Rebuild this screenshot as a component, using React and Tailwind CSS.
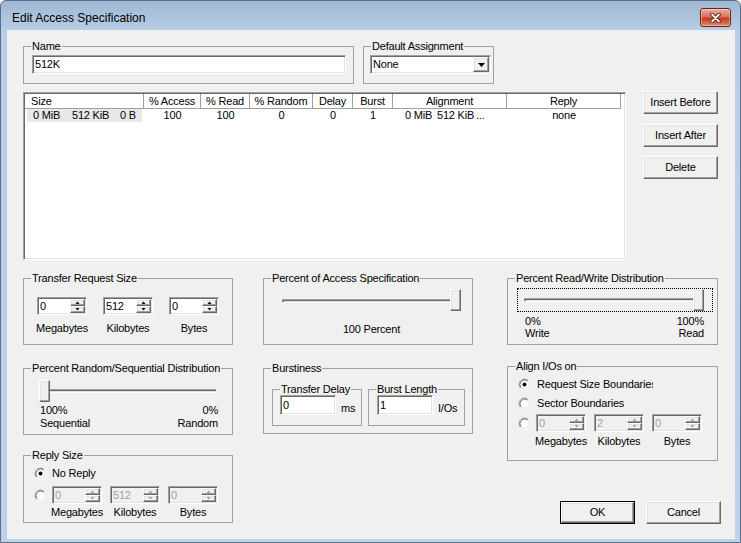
import React from 'react';

// classic win32 3d edges
const SUNKEN =
  'border border-t-[#a0a0a0] border-l-[#a0a0a0] border-r-white border-b-white shadow-[inset_1px_1px_0_#696969,inset_-1px_-1px_0_#e3e3e3]';
const RAISED =
  'border border-t-white border-l-white border-r-[#696969] border-b-[#696969] bg-[#f0f0f0] shadow-[inset_-1px_-1px_0_#a0a0a0,inset_1px_1px_0_#e3e3e3]';

function Group({ title, className = '', children }) {
  return (
    <fieldset className={`shrink-0 border border-[#a0a0a0] ${className}`}>
      <legend className="ml-[7px] px-[1px] leading-[13px] whitespace-nowrap">{title}</legend>
      {children}
    </fieldset>
  );
}

function Button({ children, isDefault, className = '' }) {
  if (isDefault) {
    return (
      <div className={`shrink-0 border border-black ${className}`}>
        <div className={`${RAISED} flex h-full items-center justify-center`}>{children}</div>
      </div>
    );
  }
  return <div className={`${RAISED} flex shrink-0 items-center justify-center ${className}`}>{children}</div>;
}

function Edit({ value, className = '' }) {
  return (
    <div className={`${SUNKEN} flex shrink-0 items-center bg-white pl-[2px] leading-[13px] ${className}`}>{value}</div>
  );
}

function SpinBtn({ up, disabled }) {
  return (
    <div className={`${RAISED} flex h-[7px] items-center justify-center`}>
      <svg width="5" height="3" viewBox="0 0 5 3">
        <path d={up ? 'M0.5 3h4L2.5 0.5z' : 'M0.5 0h4L2.5 2.5z'} fill={disabled ? '#a0a0a0' : '#000'} />
      </svg>
    </div>
  );
}

function Spin({ value, disabled }) {
  return (
    <div
      className={`${SUNKEN} flex h-[18px] w-[50px] shrink-0 ${disabled ? 'bg-[#f0f0f0] text-[#a0a0a0]' : 'bg-white'}`}
    >
      <div className="flex flex-1 items-center pl-[2px] leading-[13px]">{value}</div>
      <div className="my-[1px] mr-[1px] flex w-[15px] flex-col">
        <SpinBtn up disabled={disabled} />
        <SpinBtn disabled={disabled} />
      </div>
    </div>
  );
}

function SpinCol({ value, label, disabled, gap = 'mt-[3px]' }) {
  return (
    <div className="flex w-[50px] flex-col items-center">
      <Spin value={value} disabled={disabled} />
      <div className={`${gap} whitespace-nowrap leading-[13px]`}>{label}</div>
    </div>
  );
}

function Radio({ checked }) {
  return (
    <svg width="13" height="13" viewBox="0 0 13 13" className="shrink-0">
      <circle cx="6.5" cy="6.5" r="5" fill="#fff" />
      <path d="M2.61 10.39A5.5 5.5 0 0 1 10.39 2.61" fill="none" stroke="#a0a0a0" />
      <path d="M10.39 2.61A5.5 5.5 0 0 1 2.61 10.39" fill="none" stroke="#fff" />
      <path d="M3.32 9.68A4.5 4.5 0 0 1 9.68 3.32" fill="none" stroke="#696969" />
      <path d="M9.68 3.32A4.5 4.5 0 0 1 3.32 9.68" fill="none" stroke="#e3e3e3" />
      {checked && <circle cx="6.5" cy="6.5" r="2" fill="#000" />}
    </svg>
  );
}

function Channel({ className }) {
  return <div className={`${SUNKEN} absolute h-[4px] ${className}`} />;
}

function Thumb({ className }) {
  return <div className={`${RAISED} absolute top-0 h-[22px] w-[11px] ${className}`} />;
}

const columns = [
  { label: 'Size', w: 'w-[119px]', left: true },
  { label: '% Access', w: 'w-[57px]' },
  { label: '% Read', w: 'w-[49px]' },
  { label: '% Random', w: 'w-[63px]' },
  { label: 'Delay', w: 'w-[40px]' },
  { label: 'Burst', w: 'w-[40px]' },
  { label: 'Alignment', w: 'w-[114px]' },
  { label: 'Reply', w: 'w-[114px]' },
];

export default function App() {
  return (
    <div className="flex h-[543px] w-[741px] flex-col overflow-hidden rounded-t-[6px] border border-[#5b6f86] bg-[linear-gradient(to_bottom,#9fb8d3_0px,#b8cee7_30px,#bcd2ea_100%)] font-['Liberation_Sans',Arial,sans-serif] text-black">
      {/* title bar */}
      <div className="flex h-[29px] shrink-0 items-start pl-[11px] pr-[9px]">
        <span className="mt-[10px] flex-1 text-[12px] leading-[14px]">Edit Access Specification</span>
        <div className="mt-[7px] flex h-[19px] w-[31px] items-center justify-center rounded-[3px] border border-[#6b2318] bg-[linear-gradient(#eab0a2,#d97059_45%,#c4391d_55%,#dc8a70)] shadow-[inset_0_0_0_1px_rgba(255,255,255,0.35)]">
          <svg width="11" height="10" viewBox="0 0 11 10">
            <path d="M2 1.5l7 7M9 1.5l-7 7" stroke="#4a1209" strokeWidth="3.4" strokeLinecap="round" />
            <path d="M2 1.5l7 7M9 1.5l-7 7" stroke="#fff" strokeWidth="1.8" strokeLinecap="round" />
          </svg>
        </div>
      </div>

      {/* client area */}
      <div className="ml-[6px] h-[509px] w-[728px] shrink-0 bg-[#f0f0f0] pl-[16px] pt-[10px] text-[11px] tracking-[-0.2px]">
        <div className="flex gap-[9px]">
          <Group title="Name" className="h-[44px] w-[331px]">
            <Edit value="512K" className="ml-[8px] mt-[2px] h-[19px] w-[314px]" />
          </Group>
          <Group title="Default Assignment" className="h-[44px] w-[131px]">
            <div className={`${SUNKEN} ml-[6px] mt-[2px] flex h-[19px] w-[121px] bg-white`}>
              <div className="flex flex-1 items-center pl-[2px] leading-[13px]">None</div>
              <div className={`${RAISED} my-[1px] mr-[1px] flex w-[16px] items-center justify-center`}>
                <svg width="7" height="4" viewBox="0 0 7 4">
                  <path d="M0 0h7L3.5 4z" fill="#000" />
                </svg>
              </div>
            </div>
          </Group>
        </div>

        {/* list + side buttons */}
        <div className="mt-[8px] flex items-start">
          <div className={`${SUNKEN} h-[168px] w-[603px] shrink-0 bg-white p-[1px]`}>
            <div className="flex h-[15px]">
              {columns.map((c) => (
                <div
                  key={c.label}
                  className={`${c.w} flex shrink-0 items-center border-r border-b border-r-[#a0a0a0] border-b-[#a0a0a0] leading-[13px] shadow-[inset_1px_1px_0_#fff] ${c.left ? 'pl-[6px]' : 'justify-center'}`}
                >
                  {c.label}
                </div>
              ))}
            </div>
            <div className="flex h-[13px] items-center leading-[13px]">
              <div className="w-[119px] shrink-0 pl-[2px]">
                <div className="flex h-[13px] w-[115px] items-center bg-[#e8e8e8] pl-[6px]">
                  <span className="w-[39px]">0 MiB</span>
                  <span className="w-[48px]">512 KiB</span>
                  <span>0 B</span>
                </div>
              </div>
              <div className="w-[57px] shrink-0 text-center">100</div>
              <div className="w-[49px] shrink-0 text-center">100</div>
              <div className="w-[63px] shrink-0 text-center">0</div>
              <div className="w-[40px] shrink-0 text-center">0</div>
              <div className="w-[40px] shrink-0 text-center">1</div>
              <div className="flex w-[114px] shrink-0 pl-[12px]">
                <span className="w-[32px]">0 MiB</span>
                <span className="w-[39px]">512 KiB</span>
                <span>...</span>
              </div>
              <div className="w-[114px] shrink-0 text-center">none</div>
            </div>
          </div>
          <div className="ml-[17px] mt-[-1px] flex flex-col">
            <Button className="h-[23px] w-[75px]">Insert Before</Button>
            <Button className="mt-[10px] h-[23px] w-[75px]">Insert After</Button>
            <Button className="mt-[9px] h-[23px] w-[75px]">Delete</Button>
          </div>
        </div>

        {/* lower controls */}
        <div className="mt-[12px] flex items-start">
          <div className="flex w-[210px] shrink-0 flex-col">
            <Group title="Transfer Request Size" className="h-[73px] w-[210px]">
              <div className="ml-[13px] mt-[12px] flex gap-[16px]">
                <SpinCol value="0" label="Megabytes" gap="mt-[7px]" />
                <SpinCol value="512" label="Kilobytes" gap="mt-[7px]" />
                <SpinCol value="0" label="Bytes" gap="mt-[7px]" />
              </div>
            </Group>

            <Group title="Percent Random/Sequential Distribution" className="mt-[17px] h-[73px] w-[210px]">
              <div className="relative ml-[14px] mt-[5px] h-[22px] w-[182px]">
                <Channel className="left-[2px] top-[9px] w-[177px]" />
                <Thumb className="left-[1px]" />
              </div>
              <div className="ml-[16px] mt-[2px] flex w-[178px] justify-between leading-[13px]">
                <div>
                  <div>100%</div>
                  <div>Sequential</div>
                </div>
                <div className="text-right">
                  <div>0%</div>
                  <div>Random</div>
                </div>
              </div>
            </Group>

            <Group title="Reply Size" className="mt-[14px] h-[74px] w-[210px]">
              <div className="ml-[10px] mt-[5px]">
                <div className="flex h-[13px] items-center gap-[5px]">
                  <Radio checked />
                  <span className="leading-[13px]">No Reply</span>
                </div>
                <div className="mt-[6px] flex items-center gap-[5px]">
                  <Radio />
                  <div className="flex gap-[8px]">
                    <Spin value="0" disabled />
                    <Spin value="512" disabled />
                    <Spin value="0" disabled />
                  </div>
                </div>
                <div className="ml-[18px] mt-[2px] flex gap-[8px]">
                  {['Megabytes', 'Kilobytes', 'Bytes'].map((l) => (
                    <div key={l} className="flex w-[50px] justify-center whitespace-nowrap leading-[13px]">
                      {l}
                    </div>
                  ))}
                </div>
              </div>
            </Group>
          </div>

          <div className="ml-[30px] flex w-[210px] shrink-0 flex-col">
            <Group title="Percent of Access Specification" className="h-[73px] w-[210px]">
              <div className="relative ml-[16px] mt-[4px] h-[22px] w-[182px]">
                <Channel className="left-[2px] top-[10px] w-[177px]" />
                <Thumb className="left-[170px]" />
              </div>
              <div className="mt-[12px] pl-[7px] text-center leading-[13px]">100 Percent</div>
            </Group>

            <Group title="Burstiness" className="mt-[17px] h-[72px] w-[210px]">
              <div className="ml-[8px] mt-[8px] flex gap-[6px]">
                <Group title="Transfer Delay" className="h-[43px] w-[90px]">
                  <div className="ml-[7px] mt-[-1px] flex items-end">
                    <Edit value="0" className="h-[20px] w-[56px]" />
                    <span className="ml-[5px] leading-[13px]">ms</span>
                  </div>
                </Group>
                <Group title="Burst Length" className="h-[43px] w-[97px]">
                  <div className="ml-[8px] mt-[-1px] flex items-end">
                    <Edit value="1" className="h-[20px] w-[56px]" />
                    <span className="ml-[5px] leading-[13px]">I/Os</span>
                  </div>
                </Group>
              </div>
            </Group>
          </div>

          <div className="ml-[34px] flex w-[211px] shrink-0 flex-col">
            <Group title="Percent Read/Write Distribution" className="h-[73px] w-[211px]">
              <div className="relative ml-[9px] mt-[3px] h-[24px] w-[196px] border border-dotted border-black">
                <Channel className="left-[6px] top-[9px] w-[173px]" />
                <Thumb className="left-[175px]" />
              </div>
              <div className="ml-[17px] mt-[3px] flex w-[179px] justify-between leading-[12px]">
                <div>
                  <div>0%</div>
                  <div>Write</div>
                </div>
                <div className="text-right">
                  <div>100%</div>
                  <div>Read</div>
                </div>
              </div>
            </Group>

            <Group title="Align I/Os on" className="mt-[15px] h-[101px] w-[211px]">
              <div className="ml-[10px] mt-[5px]">
                <div className="flex h-[13px] items-center gap-[6px]">
                  <Radio checked />
                  <span className="w-[116px] overflow-hidden whitespace-nowrap leading-[13px]">
                    Request Size Boundaries
                  </span>
                </div>
                <div className="mt-[6px] flex h-[13px] items-center gap-[6px]">
                  <Radio />
                  <span className="whitespace-nowrap leading-[13px]">Sector Boundaries</span>
                </div>
                <div className="mt-[4px] flex items-center gap-[5px]">
                  <Radio />
                  <div className="flex gap-[8px]">
                    <Spin value="0" disabled />
                    <Spin value="2" disabled />
                    <Spin value="0" disabled />
                  </div>
                </div>
                <div className="ml-[18px] mt-[3px] flex gap-[8px]">
                  {['Megabytes', 'Kilobytes', 'Bytes'].map((l) => (
                    <div key={l} className="flex w-[50px] justify-center whitespace-nowrap leading-[13px]">
                      {l}
                    </div>
                  ))}
                </div>
              </div>
            </Group>

            <div className="ml-[53px] mt-[40px] flex gap-[11px]">
              <Button isDefault className="h-[23px] w-[75px]">
                OK
              </Button>
              <Button className="h-[23px] w-[75px]">Cancel</Button>
            </div>
          </div>
        </div>
      </div>
    </div>
  );
}
